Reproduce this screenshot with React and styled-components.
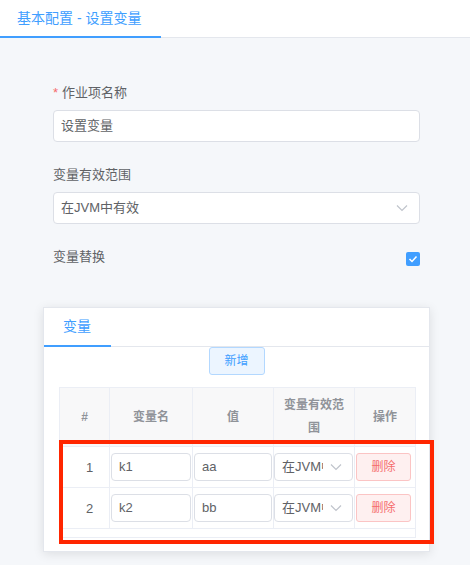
import React from "react";
import styled, { createGlobalStyle } from "styled-components";

const Global = createGlobalStyle`
  html, body { margin: 0; padding: 0; }
  body {
    background: #f5f7fa;
    font-family: "Liberation Sans", "Noto Sans CJK SC", sans-serif;
    color: #606266;
  }
  * { box-sizing: border-box; }
`;

const Page = styled.div`
  position: relative;
  width: 470px;
  min-height: 565px;
  background: #f5f7fa;
  overflow: hidden;
`;

const TabBar = styled.div`
  display: flex;
  height: ${(p) => p.$h}px;
  background: #fff;
  border-bottom: 1px solid #e4e7ed;
`;

const Tab = styled.div`
  height: ${(p) => p.$h}px;
  margin-bottom: -1px;
  padding: 0 ${(p) => p.$pr}px 0 ${(p) => p.$pl}px;
  line-height: ${(p) => p.$h - 2}px;
  font-size: 14px;
  color: #409eff;
  border-bottom: 2px solid #409eff;
  white-space: nowrap;
`;

const Form = styled.div`
  padding: 45px 50px 0 53px;
`;

const Field = styled.div`
  margin-bottom: 23px;
`;

const Label = styled.div`
  font-size: 13px;
  line-height: 20px;
  color: #606266;
  margin-bottom: ${(p) => (p.$inline ? 0 : 7)}px;
`;

const Star = styled.span`
  color: #f56c6c;
  margin-right: 4px;
`;

const Input = styled.div`
  position: relative;
  display: flex;
  align-items: center;
  height: ${(p) => p.$h || 32}px;
  width: 100%;
  background: #fff;
  border: 1px solid #dcdfe6;
  border-radius: 4px;
  padding: 0 ${(p) => p.$pr || 7}px 0 7px;
  font-size: 13px;
  color: #606266;
`;

const Value = styled.span`
  flex: 1;
  min-width: 0;
  overflow: hidden;
  white-space: nowrap;
  line-height: 20px;
`;

const Arrow = styled.svg`
  position: absolute;
  right: ${(p) => p.$r}px;
  top: 50%;
  margin-top: -4px;
  width: 12px;
  height: 8px;
`;

const SwitchRow = styled.div`
  display: flex;
  align-items: center;
  justify-content: space-between;
  height: 20px;
`;

const Check = styled.div`
  width: 14px;
  height: 14px;
  margin-top: 4px;
  border-radius: 2px;
  background: #409eff;
  display: flex;
  align-items: center;
  justify-content: center;
`;

const CardWrap = styled.div`
  padding: 40px 0 0 43px;
`;

const Card = styled.div`
  width: 387px;
  height: 245px;
  background: #fff;
  border: 1px solid #e4e7ed;
  box-shadow: 0 2px 10px rgba(0, 0, 0, 0.1);
`;

const BtnRow = styled.div`
  display: flex;
  justify-content: center;
  margin-bottom: 12px;
`;

const Button = styled.div`
  height: 28px;
  width: ${(p) => p.$w}px;
  border-radius: 3px;
  font-size: 12px;
  line-height: 26px;
  text-align: center;
  background: ${(p) => (p.$danger ? "#fef0f0" : "#ecf5ff")};
  border: 1px solid ${(p) => (p.$danger ? "#fbc4c4" : "#b3d8ff")};
  color: ${(p) => (p.$danger ? "#f56c6c" : "#409eff")};
`;

const TableWrap = styled.div`
  margin-left: 15px;
  width: 357px;
  border: 1px solid #ebeef5;
  padding-bottom: 8px;
`;

const Row = styled.div`
  display: grid;
  grid-template-columns: 50px 83px 81px 81px 60px;
  height: ${(p) => p.$h}px;
  border-bottom: 1px solid #ebeef5;
  background: ${(p) => (p.$head ? "#f8f8f9" : "#fff")};
`;

const HeadCell = styled.div`
  display: flex;
  align-items: center;
  justify-content: center;
  text-align: center;
  padding: 0 10px;
  border-right: 1px solid #ebeef5;
  font-size: 12px;
  line-height: 23px;
  font-weight: bold;
  color: #909399;
  &:last-child { border-right: none; }
`;

const Cell = styled.div`
  display: flex;
  align-items: center;
  justify-content: ${(p) => (p.$center ? "center" : "flex-start")};
  padding: 0 ${(p) => (p.$center ? 0 : 1)}px 0 ${(p) => (p.$center ? 10 : p.$pl ?? 1)}px;
  border-right: 1px solid #ebeef5;
  font-size: 13px;
  color: #606266;
  &:last-child { border-right: none; }
`;

const Annot = styled.div`
  position: absolute;
  left: 59px;
  top: 440px;
  width: 375px;
  height: 104px;
  border: 4px solid #ff2600;
  pointer-events: none;
`;

const Chevron = ({ r }) => (
  <Arrow $r={r} viewBox="0 0 12 8">
    <polyline points="1,1.5 6,6.5 11,1.5" fill="none" stroke="#c0c4cc" strokeWidth="1.2" />
  </Arrow>
);

const rows = [
  { n: 1, k: "k1", v: "aa" },
  { n: 2, k: "k2", v: "bb" },
];

export default function App() {
  return (
    <Page>
      <Global />
      <TabBar $h={38}>
        <Tab $h={38} $pl={17} $pr={20}>基本配置 - 设置变量</Tab>
      </TabBar>
      <Form>
        <Field>
          <Label><Star>*</Star>作业项名称</Label>
          <Input><Value>设置变量</Value></Input>
        </Field>
        <Field>
          <Label>变量有效范围</Label>
          <Input $pr={30}>
            <Value>在JVM中有效</Value>
            <Chevron r={11} />
          </Input>
        </Field>
        <SwitchRow>
          <Label $inline>变量替换</Label>
          <Check>
            <svg width="10" height="8" viewBox="0 0 10 8">
              <polyline points="1.5,4 4,6.5 8.5,1.5" fill="none" stroke="#fff" strokeWidth="1.5" />
            </svg>
          </Check>
        </SwitchRow>
      </Form>
      <CardWrap>
        <Card>
          <TabBar $h={39}>
            <Tab $h={39} $pl={19} $pr={20}>变量</Tab>
          </TabBar>
          <BtnRow>
            <Button $w={56}>新增</Button>
          </BtnRow>
          <TableWrap>
            <Row $head $h={59}>
              <HeadCell>#</HeadCell>
              <HeadCell>变量名</HeadCell>
              <HeadCell>值</HeadCell>
              <HeadCell>变量有效范围</HeadCell>
              <HeadCell>操作</HeadCell>
            </Row>
            {rows.map((r) => (
              <Row key={r.n} $h={41}>
                <Cell $center>{r.n}</Cell>
                <Cell><Input $h={28}><Value>{r.k}</Value></Input></Cell>
                <Cell><Input $h={28}><Value>{r.v}</Value></Input></Cell>
                <Cell $pl={0}>
                  <Input $h={28} $pr={29}>
                    <Value>在JVM中有效</Value>
                    <Chevron r={10} />
                  </Input>
                </Cell>
                <Cell><Button $danger $w={55}>删除</Button></Cell>
              </Row>
            ))}
          </TableWrap>
        </Card>
      </CardWrap>
      <Annot />
    </Page>
  );
}
